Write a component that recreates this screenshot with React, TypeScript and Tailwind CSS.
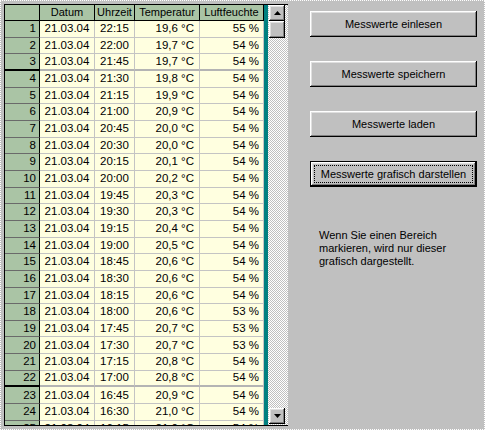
import React from "react";

const rows: [string, string, string, string][] = [
  ["21.03.04", "22:15", "19,6 °C", "55 %"],
  ["21.03.04", "22:00", "19,7 °C", "54 %"],
  ["21.03.04", "21:45", "19,7 °C", "54 %"],
  ["21.03.04", "21:30", "19,8 °C", "54 %"],
  ["21.03.04", "21:15", "19,9 °C", "54 %"],
  ["21.03.04", "21:00", "20,9 °C", "54 %"],
  ["21.03.04", "20:45", "20,0 °C", "54 %"],
  ["21.03.04", "20:30", "20,0 °C", "54 %"],
  ["21.03.04", "20:15", "20,1 °C", "54 %"],
  ["21.03.04", "20:00", "20,2 °C", "54 %"],
  ["21.03.04", "19:45", "20,3 °C", "54 %"],
  ["21.03.04", "19:30", "20,3 °C", "54 %"],
  ["21.03.04", "19:15", "20,4 °C", "54 %"],
  ["21.03.04", "19:00", "20,5 °C", "54 %"],
  ["21.03.04", "18:45", "20,6 °C", "54 %"],
  ["21.03.04", "18:30", "20,6 °C", "54 %"],
  ["21.03.04", "18:15", "20,6 °C", "54 %"],
  ["21.03.04", "18:00", "20,6 °C", "53 %"],
  ["21.03.04", "17:45", "20,7 °C", "53 %"],
  ["21.03.04", "17:30", "20,7 °C", "53 %"],
  ["21.03.04", "17:15", "20,8 °C", "54 %"],
  ["21.03.04", "17:00", "20,8 °C", "54 %"],
  ["21.03.04", "16:45", "20,9 °C", "54 %"],
  ["21.03.04", "16:30", "21,0 °C", "54 %"],
  ["21.03.04", "16:15", "21,0 °C", "54 %"],
];

const bevel =
  "shadow-[inset_-1px_-1px_#000,inset_1px_1px_#fff,inset_-2px_-2px_#808080,inset_2px_2px_#dfdfdf]";

function Arrow({ up }: { up?: boolean }) {
  return (
    <svg width="7" height="4" viewBox="0 0 7 4">
      {up ? <polygon points="3.5,0 7,4 0,4" fill="#000" /> : <polygon points="0,0 7,0 3.5,4" fill="#000" />}
    </svg>
  );
}

function Btn({ label, def }: { label: string; def?: boolean }) {
  if (def) {
    return (
      <div className="w-[167px] h-[26px] border border-black bg-[#c0c0c0]">
        <div className={`w-full h-full flex p-[3px] ${bevel}`}>
          <div className="flex-1 flex items-center justify-center border border-dotted border-black text-[11px] text-black">
            {label}
          </div>
        </div>
      </div>
    );
  }
  return (
    <div className={`w-[167px] h-[26px] bg-[#c0c0c0] flex items-center justify-center text-[11px] text-black ${bevel}`}>
      {label}
    </div>
  );
}

export default function App() {
  const green = "bg-[#aac4a5]";
  return (
    <div
      className="w-[485px] h-[430px] bg-[#c0c0c0] border border-dotted border-white flex overflow-hidden"
      style={{ fontFamily: '"Liberation Sans", Arial, sans-serif' }}
    >
      {/* Grid */}
      <div className="ml-[3px] mt-[3px] w-[284px] h-[422px] border-l border-t border-b border-black flex shrink-0">
        <div className="w-[259px] h-full flex flex-col overflow-hidden">
          {/* header */}
          <div className="flex h-[16px] shrink-0 text-[11px] text-black">
            <div className={`w-[35px] ${green} border-r border-b border-black`} />
            <div className={`w-[55px] ${green} border-r border-b border-black flex items-center justify-center`}>Datum</div>
            <div className={`w-[40px] ${green} border-r border-b border-black flex items-center justify-center`}>Uhrzeit</div>
            <div className={`w-[65px] ${green} border-r border-b border-black flex items-center justify-center`}>Temperatur</div>
            <div className={`w-[64px] ${green} border-r border-b border-black flex items-center justify-center`}>Luftfeuchte</div>
          </div>
          {rows.map((r, i) => {
            const thick = i === 2 || i === 21;
            const hb = thick ? "border-b-2 border-black" : "border-b border-[#6a6a6a]";
            const db = thick ? "border-b-2 border-[#b4b4b4]" : "border-b border-[#c4c4c4]";
            return (
              <div key={i} className="flex h-[16.67px] shrink-0 text-[11.5px] text-black leading-none">
                <div className={`w-[35px] ${green} border-r border-r-black ${hb} flex items-center justify-end pr-[3px]`}>
                  {i + 1}
                </div>
                <div className={`w-[55px] bg-[#ffffe0] border-r border-r-[#c4c4c4] ${db} flex items-center justify-center`}>
                  {r[0]}
                </div>
                <div className={`w-[40px] bg-[#ffffe0] border-r border-r-[#c4c4c4] ${db} flex items-center justify-center`}>
                  {r[1]}
                </div>
                <div className={`w-[65px] bg-[#ffffe0] border-r border-r-[#c4c4c4] ${db} flex items-center justify-end pr-[5px]`}>
                  {r[2]}
                </div>
                <div className={`w-[64px] bg-[#ffffe0] border-r border-r-[#c4c4c4] ${db} flex items-center justify-end pr-[4px]`}>
                  {r[3]}
                </div>
              </div>
            );
          })}
        </div>
        <div className="w-[4px] h-full bg-[#008080]" />
        <div className="w-[20px] h-full flex flex-col bg-[repeating-conic-gradient(#c0c0c0_0%_25%,#ffffff_0%_50%)] bg-[length:2px_2px]">
          <div className={`ml-[1px] w-[16px] h-[16px] bg-[#c0c0c0] flex items-center justify-center ${bevel}`}>
            <Arrow up />
          </div>
          <div className={`ml-[1px] mt-[0px] w-[16px] h-[17px] bg-[#c0c0c0] ${bevel}`} />
          <div className="flex-1" />
          <div className={`ml-[1px] mb-[1px] w-[16px] h-[16px] bg-[#c0c0c0] flex items-center justify-center ${bevel}`}>
            <Arrow />
          </div>
        </div>
      </div>

      {/* Right panel */}
      <div className="ml-[22px] pt-[10px] flex flex-col">
        <div className="flex flex-col gap-[24px]">
          <Btn label="Messwerte einlesen" />
          <Btn label="Messwerte speichern" />
          <Btn label="Messwerte laden" />
          <Btn label="Messwerte grafisch darstellen" def />
        </div>
        <div className="mt-[42px] ml-[9px] text-[11px] leading-[13px] text-black">
          Wenn Sie einen Bereich
          <br />
          markieren, wird nur dieser
          <br />
          grafisch dargestellt.
        </div>
      </div>
    </div>
  );
}
